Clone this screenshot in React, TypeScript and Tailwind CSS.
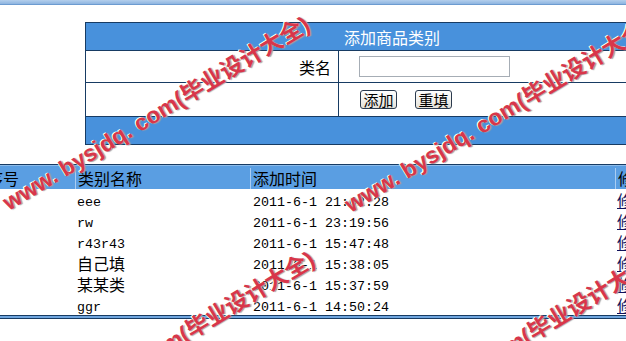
import React from "react";

const cjk = "font-['Noto_Sans_CJK_SC',sans-serif]";
const mono = "font-['Liberation_Mono','Noto_Sans_CJK_SC',monospace]";

const rows = [
  { name: "eee", latin: true, time: "2011-6-1 21:02:28" },
  { name: "rw", latin: true, time: "2011-6-1 23:19:56" },
  { name: "r43r43", latin: true, time: "2011-6-1 15:47:48" },
  { name: "自己填", latin: false, time: "2011-6-1 15:38:05" },
  { name: "某某类", latin: false, time: "2011-6-1 15:37:59" },
  { name: "ggr", latin: true, time: "2011-6-1 14:50:24" },
];

function Watermark({ className }: { className: string }) {
  return (
    <div
      className={`pointer-events-none absolute whitespace-nowrap origin-left -rotate-[31deg] text-[23px] leading-none font-bold text-[#d8364a] font-['Liberation_Sans','Noto_Sans_CJK_SC',sans-serif] [text-shadow:1px_1px_1px_#a0a0a0,-1px_-1px_0_#ffffff] ${className}`}
    >
      www. bysjdq. com(毕业设计大全)
    </div>
  );
}

function XpButton({ label }: { label: string }) {
  return (
    <button
      className={`h-[19px] w-[37px] rounded-[3px] border border-[#2b3a4e] bg-gradient-to-b from-white to-[#e4e2da] text-[15px] leading-[17px] text-black ${cjk}`}
    >
      {label}
    </button>
  );
}

export default function App() {
  return (
    <div className="relative h-[341px] w-[626px] overflow-hidden bg-white">
      <div className="h-[5px] border-b border-[#6c9bd0] bg-gradient-to-b from-[#b4cfec] to-[#8db4e0]" />

      {/* add category form */}
      <div className="ml-[85px] mt-[17px] w-[614px] border border-[#173b63]">
        <div className={`flex h-[27px] items-center justify-center bg-[#4891dc] text-[16px] text-white ${cjk}`}>
          添加商品类别
        </div>
        <div className="flex h-[32px] border-t border-[#173b63]">
          <div className={`flex w-[252px] items-center justify-end pr-[7px] text-[16px] text-black ${cjk}`}>类名</div>
          <div className="flex flex-1 items-center border-l border-[#173b63] pl-[20px]">
            <input className="h-[21px] w-[151px] border border-[#a6adb5] bg-white outline-none" />
          </div>
        </div>
        <div className="flex h-[34px] border-t border-[#173b63]">
          <div className="w-[252px]" />
          <div className="flex flex-1 items-center gap-[18px] border-l border-[#173b63] pl-[21px]">
            <XpButton label="添加" />
            <XpButton label="重填" />
          </div>
        </div>
        <div className="h-[28px] border-t border-[#173b63] bg-[#4891dc]" />
      </div>

      {/* category list */}
      <div className="ml-[-15px] mt-[19px] w-[720px]">
        <div className="border-t border-[#173b63]">
          <div className={`flex h-[24px] border-t border-[#8cbbe9] bg-[#5a9ee2] pt-[2px] text-[16px] leading-[21px] text-black ${cjk}`}>
            <div className="w-[90px] pl-[2px]">序号</div>
            <div className="w-[175px] border-l border-[#a9cdf2] pl-[2px]">类别名称</div>
            <div className="w-[365px] border-l border-[#a9cdf2] pl-[2px]">添加时间</div>
            <div className="flex-1 border-l border-[#a9cdf2] pl-[2px]">修改</div>
          </div>
        </div>
        {rows.map((r) => (
          <div key={r.time} className="flex h-[21px] items-start text-black">
            <div className="w-[90px]" />
            <div
              className={`w-[175px] pl-[2px] leading-[21px] ${r.latin ? `${mono} pt-[3px] text-[13.33px]` : `${cjk} pt-[1px] text-[16px]`}`}
            >
              {r.name}
            </div>
            <div className={`w-[365px] pl-[3px] pt-[3px] text-[13.33px] leading-[21px] ${mono}`}>{r.time}</div>
            <div className={`flex-1 pl-[2px] pt-[1px] text-[16px] leading-[21px] text-[#10105a] ${cjk}`}>
              <a className="underline">修改</a> <a className="underline">删除</a>
            </div>
          </div>
        ))}
        <div className="h-[4px] border-y border-[#173b63] bg-[#6fa5de]" />
      </div>

      <Watermark className="left-[5px] top-[193px]" />
      <Watermark className="left-[347px] top-[195px]" />
      <Watermark className="left-[10px] top-[428px]" />
      <Watermark className="left-[352px] top-[430px]" />
    </div>
  );
}
